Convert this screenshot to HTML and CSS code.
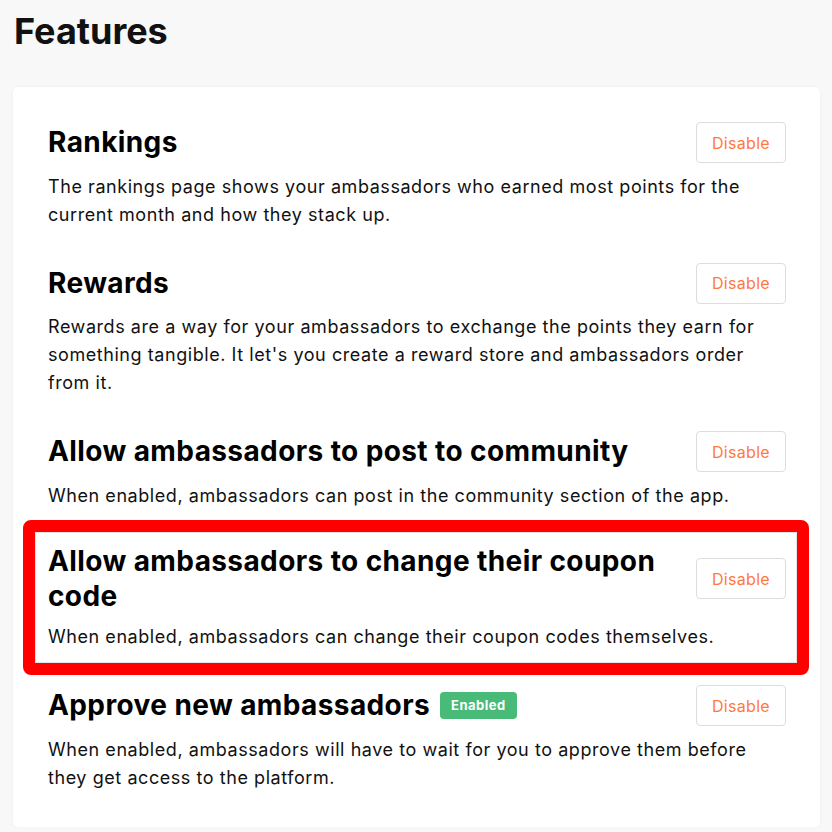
FILE: index.html
```html
<!DOCTYPE html>
<html lang="en">
<head>
  <meta charset="UTF-8" />
  <meta name="viewport" content="width=device-width, initial-scale=1.0"/>
  <title>Features</title>
  <link rel="stylesheet" href="styles.css">
</head>
<body>

  <h1>Features</h1>

  <div class="card">
    <div class="feature">
      <div class="feature-head">
        <h2>Rankings</h2>
        <button type="button">Disable</button>
      </div>
      <p>The rankings page shows your ambassadors who earned most points for the current month and how they stack up.</p>
    </div>

    <div class="feature">
      <div class="feature-head">
        <h2>Rewards</h2>
        <button type="button">Disable</button>
      </div>
      <p>Rewards are a way for your ambassadors to exchange the points they earn for something tangible. It let's you create a reward store and ambassadors order from it.</p>
    </div>

    <div class="feature">
      <div class="feature-head">
        <h2>Allow ambassadors to post to community</h2>
        <button type="button">Disable</button>
      </div>
      <p>When enabled, ambassadors can post in the community section of the app.</p>
    </div>

    <div class="feature highlight">
      <div class="feature-head">
        <h2>Allow ambassadors to change their coupon code</h2>
        <button type="button">Disable</button>
      </div>
      <p>When enabled, ambassadors can change their coupon codes themselves.</p>
    </div>

    <div class="feature">
      <div class="feature-head">
        <h2>Approve new ambassadors <span class="badge">Enabled</span></h2>
        <button type="button">Disable</button>
      </div>
      <p>When enabled, ambassadors will have to wait for you to approve them before they get access to the platform.</p>
    </div>
  </div>

</body>
</html>
```

FILE: styles.css
```css
body {
  font-family: Inter, "Noto Sans", sans-serif;
  margin: 0;
  padding: 0 12px 0 13px;
  background-color: #f8f8f8;
  color: #111;
}

h1 {
  font-size: 36px;
  font-weight: 700;
  margin: 0;
  padding: 10px 0 0 1px;
  height: 87px;
  box-sizing: border-box;
  line-height: 42px;
}

.card {
  background-color: #fff;
  border-radius: 5px;
  box-shadow: 0 0 3px rgba(0, 0, 0, 0.06);
  padding: 18px 34px 18px 35px;
}

.feature {
  padding: 17px 0;
  position: relative;
}

.feature-head {
  display: flex;
  align-items: center;
  justify-content: space-between;
  gap: 30px;
}

.feature h2 {
  font-size: 28px;
  font-weight: 700;
  line-height: 35px;
  letter-spacing: 0.4px;
  margin: 0;
  color: #000;
  display: flex;
  align-items: center;
  gap: 10px;
}

.feature p {
  font-size: 18px;
  line-height: 28px;
  letter-spacing: 0.56px;
  margin: 9.5px 0 0;
  color: #111;
}

button {
  flex-shrink: 0;
  width: 90px;
  height: 41px;
  background-color: #fff;
  border: 1px solid #ddd;
  border-radius: 4px;
  color: #ff7a3d;
  font-family: inherit;
  font-size: 16px;
  letter-spacing: 0.3px;
  cursor: pointer;
}

.badge {
  background-color: #48bb78;
  color: #fff;
  font-size: 13px;
  font-weight: 700;
  line-height: 27px;
  padding: 0 11px;
  border-radius: 4px;
  letter-spacing: 0.5px;
}

.highlight::after {
  content: "";
  position: absolute;
  top: -6.5px;
  bottom: -7px;
  left: -25px;
  right: -23px;
  border: 12px solid #ff0000;
  border-radius: 8px;
  box-shadow: inset 0 0 0 1px #e4e4e4;
  pointer-events: none;
}
```
